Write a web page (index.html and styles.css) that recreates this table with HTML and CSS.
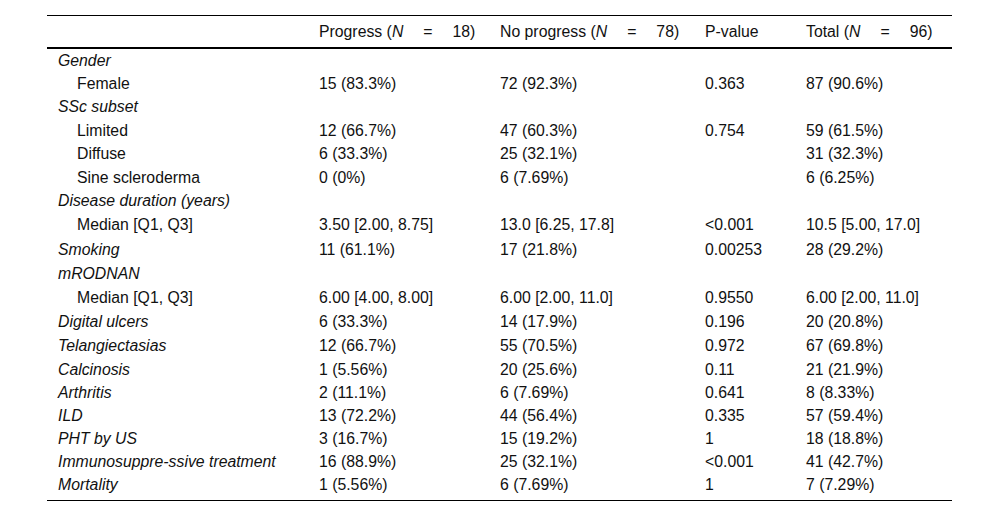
FILE: index.html
```html
<!DOCTYPE html>
<html lang="en">
<head>
<meta charset="utf-8">
<title>Table</title>
<link rel="stylesheet" href="styles.css">
</head>
<body>
<table class="data">
  <colgroup>
    <col class="c-label"><col class="c-prog"><col class="c-noprog"><col class="c-p"><col class="c-total">
  </colgroup>
  <thead>
    <tr>
      <th></th>
      <th>Progress (<i>N</i><span class="eq">=</span>18)</th>
      <th>No progress (<i>N</i><span class="eq">=</span>78)</th>
      <th>P-value</th>
      <th>Total (<i>N</i><span class="eq">=</span>96)</th>
    </tr>
  </thead>
  <tbody>
    <tr class="r-short"><td class="grp">Gender</td><td></td><td></td><td></td><td></td></tr>
    <tr><td class="sub">Female</td><td>15 (83.3%)</td><td>72 (92.3%)</td><td>0.363</td><td>87 (90.6%)</td></tr>
    <tr><td class="grp">SSc subset</td><td></td><td></td><td></td><td></td></tr>
    <tr><td class="sub">Limited</td><td>12 (66.7%)</td><td>47 (60.3%)</td><td>0.754</td><td>59 (61.5%)</td></tr>
    <tr><td class="sub">Diffuse</td><td>6 (33.3%)</td><td>25 (32.1%)</td><td></td><td>31 (32.3%)</td></tr>
    <tr><td class="sub">Sine scleroderma</td><td>0 (0%)</td><td>6 (7.69%)</td><td></td><td>6 (6.25%)</td></tr>
    <tr><td class="grp">Disease duration (years)</td><td></td><td></td><td></td><td></td></tr>
    <tr class="r-tall"><td class="sub">Median [Q1, Q3]</td><td>3.50 [2.00, 8.75]</td><td>13.0 [6.25, 17.8]</td><td>&lt;0.001</td><td>10.5 [5.00, 17.0]</td></tr>
    <tr class="r-tall"><td class="grp">Smoking</td><td>11 (61.1%)</td><td>17 (21.8%)</td><td>0.00253</td><td>28 (29.2%)</td></tr>
    <tr><td class="grp">mRODNAN</td><td></td><td></td><td></td><td></td></tr>
    <tr class="r-tall"><td class="sub">Median [Q1, Q3]</td><td>6.00 [4.00, 8.00]</td><td>6.00 [2.00, 11.0]</td><td>0.9550</td><td>6.00 [2.00, 11.0]</td></tr>
    <tr class="r-tall"><td class="grp">Digital ulcers</td><td>6 (33.3%)</td><td>14 (17.9%)</td><td>0.196</td><td>20 (20.8%)</td></tr>
    <tr><td class="grp">Telangiectasias</td><td>12 (66.7%)</td><td>55 (70.5%)</td><td>0.972</td><td>67 (69.8%)</td></tr>
    <tr class="r-short"><td class="grp">Calcinosis</td><td>1 (5.56%)</td><td>20 (25.6%)</td><td>0.11</td><td>21 (21.9%)</td></tr>
    <tr class="r-short"><td class="grp">Arthritis</td><td>2 (11.1%)</td><td>6 (7.69%)</td><td>0.641</td><td>8 (8.33%)</td></tr>
    <tr class="r-short"><td class="grp">ILD</td><td>13 (72.2%)</td><td>44 (56.4%)</td><td>0.335</td><td>57 (59.4%)</td></tr>
    <tr class="r-short"><td class="grp">PHT by US</td><td>3 (16.7%)</td><td>15 (19.2%)</td><td>1</td><td>18 (18.8%)</td></tr>
    <tr class="r-short"><td class="grp">Immunosuppre-ssive treatment</td><td>16 (88.9%)</td><td>25 (32.1%)</td><td>&lt;0.001</td><td>41 (42.7%)</td></tr>
    <tr class="r-short last"><td class="grp">Mortality</td><td>1 (5.56%)</td><td>6 (7.69%)</td><td>1</td><td>7 (7.29%)</td></tr>
  </tbody>
</table>
</body>
</html>
```

FILE: styles.css
```css
html, body {
  margin: 0;
  padding: 0;
  background: #ffffff;
}
body {
  padding-top: 15px;
  font-family: "Liberation Sans", Arial, sans-serif;
  font-size: 15.8px;
  color: #111111;
}
.data {
  width: 905px;
  margin: 0 0 0 47px;
  border-collapse: collapse;
  table-layout: fixed;
  border-top: 1px solid #000;
  border-bottom: 1px solid #000;
}
.c-label { width: 261px; }
.c-prog { width: 181px; }
.c-noprog { width: 205px; }
.c-p { width: 101px; }
.c-total { width: 157px; }

.data th {
  font-weight: normal;
  text-align: left;
  padding: 0 0 0 11px;
  height: 31px;
  white-space: nowrap;
  border-bottom: 2px solid #000;
}
.data th i { font-style: italic; }
.eq {
  display: inline-block;
  margin: 0 20px 0 20px;
}
.data td {
  padding: 0 0 0 11px;
  height: 23.5px;
  line-height: 18px;
  white-space: nowrap;
  text-align: left;
  vertical-align: middle;
}
.data tr.r-tall td { height: 24.5px; }
.data tr.r-short td { height: 23px; }
.data tr.last td { height: 23px; padding-bottom: 4px; }
.data td.grp { font-style: italic; }
.data td.sub { padding-left: 30px; }
```
